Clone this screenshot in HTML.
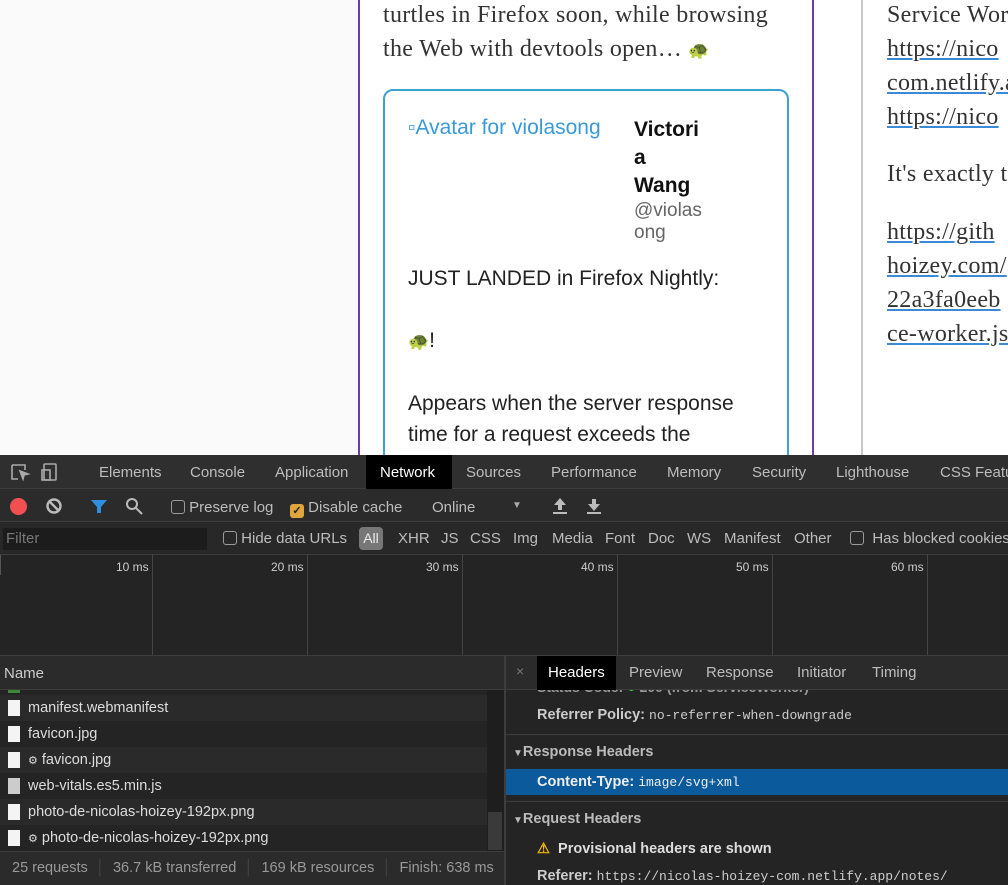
<!DOCTYPE html>
<html><head><meta charset="utf-8"><style>
*{box-sizing:border-box;margin:0;padding:0}
body{width:1008px;height:885px;overflow:hidden;background:#fff;position:relative;font-family:"Liberation Sans",sans-serif}
.abs{position:absolute}
.serif{font-family:"Liberation Serif",serif;font-size:24px;letter-spacing:0.3px;color:#333;line-height:34px}
.serif u{text-decoration-color:#3a8ad6}
.dt{font-size:15px;color:#bdbdbd;white-space:nowrap}
.cb{display:inline-block;width:14px;height:14px;border:1px solid #9a9a9a;border-radius:3px;vertical-align:-2px}
.row{position:absolute;left:0;width:487px;height:26px;font-size:14.5px;color:#ddd;line-height:26px;padding-left:28px;white-space:nowrap}
.row i{position:absolute;left:8px;top:5px;width:12px;height:16px;background:#f4f4f4}
.mono{font-family:"Liberation Mono",monospace;font-size:13px}
.f{position:absolute;top:530px;font-size:15px;color:#bdbdbd}
</style></head><body>
<div class="abs" style="left:0;top:0;width:358px;height:455px;background:#fafafa"></div>
<div class="abs" style="left:358px;top:0;width:456px;height:455px;border-left:2px solid #6a3fa0;border-right:2px solid #6a3fa0;background:#fff"></div>
<div class="abs serif" style="left:383px;top:-2px;white-space:nowrap">turtles in Firefox soon, while browsing<br>the Web with devtools open… <span style="font-size:17px">🐢</span></div>
<div class="abs" style="left:383px;top:89px;width:406px;height:380px;border:2px solid #3ea0d3;border-radius:10px"></div>
<div class="abs" style="left:408px;top:116px;font-size:21px;color:#3a9ad6">▫Avatar for violasong</div>
<div class="abs" style="left:634px;top:116px;font-size:21px;font-weight:bold;color:#111;line-height:28px">Victori<br>a<br>Wang</div>
<div class="abs" style="left:634px;top:200px;font-size:19px;color:#666;line-height:22px">@violas<br>ong</div>
<div class="abs" style="left:408px;top:263px;font-size:21px;color:#222;line-height:31px">JUST LANDED in Firefox Nightly:<br><br><span style="font-size:17px">🐢</span>!<br><br>Appears when the server response<br>time for a request exceeds the</div>
<div class="abs" style="left:861px;top:0;width:2px;height:455px;background:#c8c8c8"></div>
<div class="abs serif" style="left:887px;top:-2px;white-space:nowrap">Service Wor<br><u>https://nico</u><br><u>com.netlify.a</u><br><u>https://nico</u></div>
<div class="abs serif" style="left:887px;top:157px;white-space:nowrap">It's exactly t</div>
<div class="abs serif" style="left:887px;top:215px;white-space:nowrap"><u>https://gith</u><br><u>hoizey.com/</u><br><u>22a3fa0eeb</u><br><u>ce-worker.js</u></div>

<div class="abs" style="left:0;top:455px;width:1008px;height:430px;background:#242424"></div>
<div class="abs" style="left:0;top:455px;width:1008px;height:34px;background:#2f2f2f;border-bottom:1px solid #3d3d3d"></div>
<svg class="abs" style="left:10px;top:462px" width="56" height="20" fill="none" stroke="#aaa" stroke-width="1.6"><path d="M2 3h13v5M2 3v14h6"/><path d="M10 9l8 3-4 1-1 4z" fill="#aaa"/><rect x="34" y="2" width="12" height="16" rx="1"/><rect x="32" y="8" width="8" height="10"/></svg>
<div class="abs" style="left:366px;top:455px;width:86px;height:34px;background:#000"></div>
<div class="abs dt" style="top:464px;left:99px">Elements</div>
<div class="abs dt" style="top:464px;left:190px">Console</div>
<div class="abs dt" style="top:464px;left:275px">Application</div>
<div class="abs dt" style="top:464px;left:380px;color:#fff">Network</div>
<div class="abs dt" style="top:464px;left:466px">Sources</div>
<div class="abs dt" style="top:464px;left:551px">Performance</div>
<div class="abs dt" style="top:464px;left:667px">Memory</div>
<div class="abs dt" style="top:464px;left:752px">Security</div>
<div class="abs dt" style="top:464px;left:836px">Lighthouse</div>
<div class="abs dt" style="top:464px;left:940px">CSS Featu</div>

<div class="abs" style="left:0;top:489px;width:1008px;height:33px;background:#2b2b2b;border-bottom:1px solid #3d3d3d"></div>
<div class="abs" style="left:10px;top:498px;width:17px;height:17px;border-radius:50%;background:#f25050"></div>
<svg class="abs" style="left:45px;top:497px" width="18" height="18" fill="none" stroke="#bbb" stroke-width="2.4"><circle cx="9" cy="9" r="6.5"/><path d="M4.5 4.5l9 9"/></svg>
<svg class="abs" style="left:90px;top:498px" width="18" height="17"><path d="M1 2h16l-6 7v6h-4v-6z" fill="#2f8ee0"/></svg>
<svg class="abs" style="left:125px;top:497px" width="18" height="18" fill="none" stroke="#bbb" stroke-width="2"><circle cx="7" cy="7" r="5"/><path d="M11 11l6 6"/></svg>
<div class="abs dt" style="left:171px;top:499px"><span class="cb"></span> Preserve log</div>
<div class="abs dt" style="left:290px;top:499px"><span class="cb" style="background:#e0a53c;border-color:#e0a53c;color:#222;font-size:11px;line-height:12px;text-align:center;font-weight:bold">✓</span> Disable cache</div>
<div class="abs dt" style="left:432px;top:499px">Online</div>
<div class="abs" style="left:512px;top:500px;font-size:10px;color:#aaa">▼</div>
<svg class="abs" style="left:552px;top:497px" width="50" height="18" fill="#bbb"><path d="M8 1l6 7h-4v5h-4v-5h-4z"/><rect x="1" y="15" width="14" height="2"/><path d="M42 14l6-7h-4v-5h-4v5h-4z"/><rect x="35" y="15" width="14" height="2"/></svg>

<div class="abs" style="left:0;top:522px;width:1008px;height:33px;background:#282828;border-bottom:1px solid #3d3d3d"></div>
<div class="abs" style="left:3px;top:528px;width:204px;height:22px;background:#1c1c1c;color:#777;font-size:15px;line-height:22px;padding-left:3px">Filter</div>
<div class="abs dt" style="left:223px;top:530px"><span class="cb"></span> Hide data URLs</div>
<div class="abs" style="left:359px;top:527px;width:24px;height:23px;border-radius:4px;background:#777;color:#eee;font-size:14px;line-height:23px;text-align:center">All</div>
<span class="f" style="left:398px">XHR</span><span class="f" style="left:441px">JS</span><span class="f" style="left:470px">CSS</span><span class="f" style="left:513px">Img</span><span class="f" style="left:552px">Media</span><span class="f" style="left:605px">Font</span><span class="f" style="left:648px">Doc</span><span class="f" style="left:687px">WS</span><span class="f" style="left:724px">Manifest</span><span class="f" style="left:794px">Other</span>
<div class="abs dt" style="left:850px;top:530px"><span class="cb"></span>&nbsp; Has blocked cookies</div>

<div class="abs" style="left:152px;top:555px;width:1px;height:100px;background:#444"></div>
<div class="abs" style="left:307px;top:555px;width:1px;height:100px;background:#444"></div>
<div class="abs" style="left:462px;top:555px;width:1px;height:100px;background:#444"></div>
<div class="abs" style="left:617px;top:555px;width:1px;height:100px;background:#444"></div>
<div class="abs" style="left:772px;top:555px;width:1px;height:100px;background:#444"></div>
<div class="abs" style="left:927px;top:555px;width:1px;height:100px;background:#444"></div>
<div class="abs" style="left:0;top:555px;width:1px;height:20px;background:#555"></div>
<div class="abs" style="top:560px;left:116px;font-size:12px;color:#ccc">10 ms</div>
<div class="abs" style="top:560px;left:271px;font-size:12px;color:#ccc">20 ms</div>
<div class="abs" style="top:560px;left:426px;font-size:12px;color:#ccc">30 ms</div>
<div class="abs" style="top:560px;left:581px;font-size:12px;color:#ccc">40 ms</div>
<div class="abs" style="top:560px;left:736px;font-size:12px;color:#ccc">50 ms</div>
<div class="abs" style="top:560px;left:891px;font-size:12px;color:#ccc">60 ms</div>

<div class="abs" style="left:0;top:655px;width:1008px;height:35px;background:#2b2b2b;border-top:1px solid #3d3d3d;border-bottom:1px solid #3d3d3d"></div>
<div class="abs dt" style="left:4px;top:665px;color:#ccc">Name</div>
<div class="abs" style="left:504px;top:655px;width:2px;height:230px;background:#3d3d3d"></div>
<div class="abs" style="left:8px;top:690px;width:12px;height:3px;background:#3a8a3a"></div>
<div class="row" style="top:695px;background:#2a2a2a"><i></i>manifest.webmanifest</div>
<div class="row" style="top:721px;background:#242424"><i></i>favicon.jpg</div>
<div class="row" style="top:747px;background:#2a2a2a"><i></i><span style="font-size:11px">⚙</span> favicon.jpg</div>
<div class="row" style="top:773px;background:#242424"><i style="background:#ccc"></i>web-vitals.es5.min.js</div>
<div class="row" style="top:799px;background:#2a2a2a"><i></i>photo-de-nicolas-hoizey-192px.png</div>
<div class="row" style="top:825px;background:#242424"><i></i><span style="font-size:11px">⚙</span> photo-de-nicolas-hoizey-192px.png</div>
<div class="abs" style="left:487px;top:690px;width:17px;height:161px;background:#1e1e1e"></div>
<div class="abs" style="left:488px;top:812px;width:14px;height:38px;background:#3a3a3a"></div>
<div class="abs" style="left:0;top:851px;width:504px;height:34px;background:#2b2b2b;border-top:1px solid #3d3d3d"></div>
<div class="abs" style="left:12px;top:860px;font-size:14.5px;color:#999;white-space:nowrap">25 requests<span style="color:#444"> &nbsp;│&nbsp; </span>36.7 kB transferred<span style="color:#444"> &nbsp;│&nbsp; </span>169 kB resources<span style="color:#444"> &nbsp;│&nbsp; </span>Finish: 638 ms</div>

<div class="abs" style="left:516px;top:663px;font-size:14px;color:#777">×</div>
<div class="abs" style="left:537px;top:656px;width:79px;height:34px;background:#000"></div>
<div class="abs dt" style="left:548px;top:664px;color:#fff">Headers</div>
<div class="abs dt" style="left:629px;top:664px">Preview</div>
<div class="abs dt" style="left:706px;top:664px">Response</div>
<div class="abs dt" style="left:797px;top:664px">Initiator</div>
<div class="abs dt" style="left:872px;top:664px">Timing</div>
<div class="abs" style="left:537px;top:690px;height:5px;overflow:hidden;font-size:14px;color:#999;font-weight:bold"><div style="margin-top:-11px">Status Code: <span style="color:#3c3">●</span> 200 (from ServiceWorker)</div></div>
<div class="abs" style="left:537px;top:707px;font-size:14.5px;color:#ccc;font-weight:bold;white-space:nowrap">Referrer Policy: <span class="mono" style="font-weight:normal">no-referrer-when-downgrade</span></div>
<div class="abs" style="left:506px;top:734px;width:502px;height:1px;background:#3d3d3d"></div>
<div class="abs" style="left:513px;top:744px;font-size:14.5px;color:#bbb;font-weight:bold"><span style="font-size:10px">▼</span>Response Headers</div>
<div class="abs" style="left:506px;top:769px;width:502px;height:26px;background:#0b5a9c"></div>
<div class="abs" style="left:537px;top:774px;font-size:14.5px;color:#eee;font-weight:bold;white-space:nowrap">Content-Type: <span class="mono" style="font-weight:normal">image/svg+xml</span></div>
<div class="abs" style="left:506px;top:801px;width:502px;height:1px;background:#3d3d3d"></div>
<div class="abs" style="left:513px;top:811px;font-size:14.5px;color:#bbb;font-weight:bold"><span style="font-size:10px">▼</span>Request Headers</div>
<div class="abs" style="left:537px;top:841px;font-size:14.5px;color:#ddd;font-weight:bold"><span style="color:#f0b400">⚠</span>&nbsp; Provisional headers are shown</div>
<div class="abs" style="left:537px;top:868px;font-size:14.5px;color:#ccc;font-weight:bold;white-space:nowrap">Referer: <span class="mono" style="font-weight:normal">https://nicolas-hoizey-com.netlify.app/notes/</span></div>
</body></html>
